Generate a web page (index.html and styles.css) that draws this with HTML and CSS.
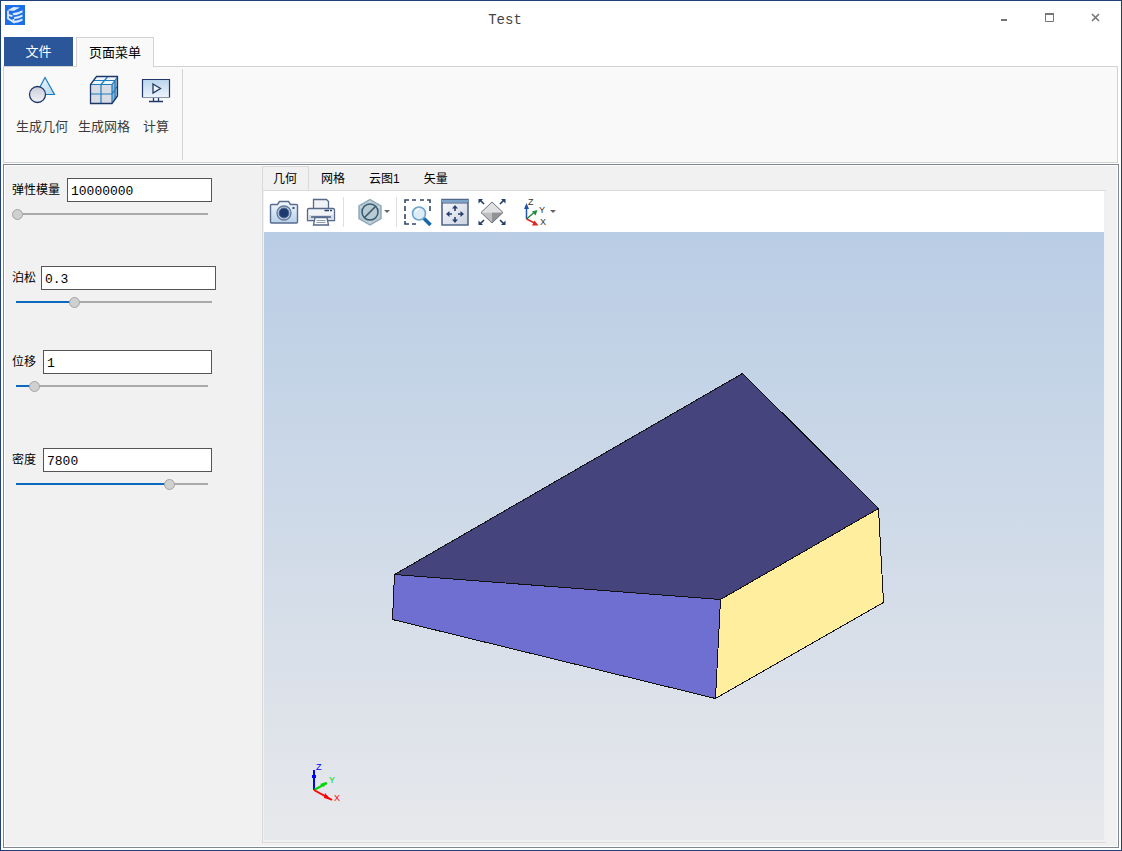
FILE: index.html
```html
<!DOCTYPE html>
<html lang="zh-CN">
<head>
<meta charset="utf-8">
<title>Test</title>
<link rel="stylesheet" href="styles.css">
</head>
<body>
<div class="window">
  <header class="titlebar">
    <svg class="app-icon" width="20" height="20" viewBox="0 0 20 20" aria-hidden="true">
      <rect width="20" height="20" fill="#1c6fe6"/>
      <path d="M2 5.500 8.500 2l6.500.500-6 3.200Z" fill="#dceafd"/>
      <path d="M3 6v7.500l5.500 3.500v-3M3 9.800l4.500 1.400" fill="none" stroke="#dceafd" stroke-width="1.800"/>
      <path d="M7.500 8.300q5-.300 10-3v2.200q-5 2.700-9 2.800ZM9 12q4-.300 8.500-2.500v2.200Q13 14 9 14ZM8 16q5-.300 9.500-2.500v2.200Q13 18 9 18Z" fill="#dceafd"/>
    </svg>
    <h1 class="title">Test</h1>
    <div class="controls">
      <button class="control" type="button" aria-label="最小化"><svg width="10" height="10" viewBox="0 0 10 10"><path d="M2 6h6v2H2z" fill="#757575"/></svg></button>
      <button class="control" type="button" aria-label="最大化"><svg width="10" height="10" viewBox="0 0 10 10"><path d="M.5 1v7.500h8V1" fill="none" stroke="#757575"/><path d="M0 0h9v2H0z" fill="#757575"/></svg></button>
      <button class="control" type="button" aria-label="关闭"><svg width="10" height="10" viewBox="0 0 10 10"><path d="m1 1 7 7M8 1 1 8" fill="none" stroke="#757575" stroke-width="1.600"/></svg></button>
    </div>
  </header>

  <nav class="menu">
    <button class="menu-tab menu-tab-file" type="button">文件</button>
    <button class="menu-tab menu-tab-active" type="button">页面菜单</button>
  </nav>

  <section class="ribbon">
    <div class="ribbon-group">
      <button class="tool" type="button">
        <svg width="30" height="30" viewBox="0 0 30 30" aria-hidden="true">
          <defs>
            <linearGradient id="tri" x1="0" y1="0" x2="1" y2="1"><stop offset="0" stop-color="#f4faff"/><stop offset="1" stop-color="#b5d7ee"/></linearGradient>
            <linearGradient id="ball" x1="0" y1="0" x2="0" y2="1"><stop offset="0" stop-color="#c9ccd8"/><stop offset="1" stop-color="#f2f2f6"/></linearGradient>
          </defs>
          <path d="M18 2.500 27.500 19.500H9Z" fill="url(#tri)" stroke="#1b7dbd" stroke-width="1.200"/>
          <circle cx="10.500" cy="19.500" r="8" fill="url(#ball)" stroke="#1f3767" stroke-width="1.300"/>
        </svg>
        <span>生成几何</span>
      </button>
      <button class="tool" type="button">
        <svg width="30" height="30" viewBox="0 0 30 30" aria-hidden="true">
          <path d="M1.500 9.500 8 1.500h20.500L23 9.500Z" fill="#eef5fb"/>
          <path d="M1.500 9.500H23v19H1.500Z" fill="#d9dce4"/>
          <path d="M23 9.500 28.500 2v19L23 28.500Z" fill="#9eb3cd"/>
          <path d="M1.500 19H23l5.500-8M12 28.500v-19L18.500 2M4.500 5.500H26v19M1.500 9.500H23v19M23 9.500 28.500 2" fill="none" stroke="#1b7dbd" stroke-width="1.200"/>
          <path d="M23 28.500H1.500v-19l6-8h21V21Z" fill="none" stroke="#1f3767" stroke-width="1.300"/>
        </svg>
        <span>生成网格</span>
      </button>
      <button class="tool" type="button">
        <svg width="30" height="30" viewBox="0 0 30 30" aria-hidden="true">
          <defs><linearGradient id="screen" x1="0" y1="0" x2="0" y2="1"><stop offset="0" stop-color="#b9d5ec"/><stop offset="1" stop-color="#edf4fb"/></linearGradient></defs>
          <path d="M1.500 4.500h27v18h-27Z" fill="url(#screen)" stroke="#1f3767" stroke-width="1.200"/>
          <path d="M1 22.500h28" stroke="#8793ad"/>
          <path d="M12.500 23v3.500M17.500 23v3.500M8 26.500h14" stroke="#1f3767" stroke-width="1.300"/>
          <path d="m12 9 7.500 4.500L12 18Z" fill="#eef5fb" stroke="#1f3767" stroke-width="1.300"/>
        </svg>
        <span>计算</span>
      </button>
    </div>
  </section>

  <main class="workspace">
    <form class="parameters">
      <div class="parameter">
        <div class="field"><label for="modulus">弹性模量</label><input class="value" id="modulus" type="text" value="10000000"></div>
        <input class="slider" type="range" aria-label="弹性模量" min="0" max="100" value="0" style="--fill:0%">
      </div>
      <div class="parameter parameter-wide">
        <div class="field"><label for="poisson">泊松</label><input class="value" id="poisson" type="text" value="0.3"></div>
        <input class="slider" type="range" aria-label="泊松" min="0" max="1" step="0.1" value="0.3" style="--fill:30%">
      </div>
      <div class="parameter parameter-spaced">
        <div class="field"><label for="shift">位移</label><input class="value" id="shift" type="text" value="1"></div>
        <input class="slider" type="range" aria-label="位移" min="0" max="11" value="1" style="--fill:9%">
      </div>
      <div class="parameter">
        <div class="field"><label for="density">密度</label><input class="value" id="density" type="text" value="7800"></div>
        <input class="slider" type="range" aria-label="密度" min="0" max="9500" step="100" value="7800" style="--fill:82%">
      </div>
    </form>

    <section class="viewer">
      <div class="view-tabs" role="tablist">
        <button class="view-tab view-tab-active" type="button" role="tab" aria-selected="true">几何</button>
        <button class="view-tab" type="button" role="tab">网格</button>
        <button class="view-tab" type="button" role="tab">云图1</button>
        <button class="view-tab" type="button" role="tab">矢量</button>
      </div>
      <div class="view-panel">
        <div class="toolbar">
          <button class="icon-button" type="button" aria-label="截图">
            <svg width="30" height="30" viewBox="0 0 30 30">
              <defs><linearGradient id="cam" x1="0" y1="0" x2="0" y2="1"><stop offset="0" stop-color="#f4f8fc"/><stop offset="1" stop-color="#b6d0e9"/></linearGradient></defs>
              <path d="M2.500 7.500h6l2-3h9l2 3h6q1 0 1 1v16.500q0 1-1 1h-25q-1 0-1-1V8.500q0-1 1-1Z" fill="url(#cam)" stroke="#596b8e" stroke-width="1.400"/>
              <circle cx="15" cy="16" r="7" fill="#c8d7e8" stroke="#657898" stroke-width="1.300"/>
              <circle cx="15" cy="16" r="5" fill="#1d3a70" stroke="#526b93"/>
              <path d="M23.500 10h2v2h-2z" fill="#34517f"/>
            </svg>
          </button>
          <button class="icon-button" type="button" aria-label="打印">
            <svg width="30" height="30" viewBox="0 0 30 30">
              <path d="M7.500 12V2.500h13l2 2V12Z" fill="#f0f2f6" stroke="#566987" stroke-width="1.300"/>
              <path d="M3 11.500h24q1.500 0 1.500 1.500v10.500h-27V13q0-1.500 1.500-1.500Z" fill="#f1f3f7" stroke="#566987" stroke-width="1.300"/>
              <path d="M2 18h26v5H2z" fill="#d5dae5"/>
              <path d="M18.500 13.500h4.500M24 13.500h2" stroke="#263f6f" stroke-width="1.500"/>
              <path d="M5 20h20" stroke="#425b83" stroke-width="1.500"/>
              <path d="M9 20.500 7.500 28h15L21 20.500Z" fill="#fafbfd" stroke="#566987" stroke-width="1.300"/>
              <path d="M10.500 23.500h9M10.500 25.500h9" stroke="#8e9cb3"/>
            </svg>
          </button>
          <span class="divider"></span>
          <button class="icon-button icon-button-menu" type="button" aria-label="显示模式">
            <svg width="26" height="30" viewBox="0 0 26 30">
              <path d="M14 2.500 25 9v12.500L14 28 3 21.500V9Z" fill="#b8c9d3" stroke="#8ca8b8" stroke-width="1.400"/>
              <path d="M14 4v22M4 9.500l10 5 10-5" fill="none" stroke="#d5e0e6"/>
              <circle cx="14" cy="15" r="8" fill="#b8cbd3" stroke="#35586c" stroke-width="1.500"/>
              <path d="m8.500 20.500 11-11" stroke="#35586c" stroke-width="1.600"/>
            </svg>
            <span class="caret"></span>
          </button>
          <span class="divider"></span>
          <button class="icon-button" type="button" aria-label="框选缩放">
            <svg width="30" height="30" viewBox="0 0 30 30">
              <path d="M2 6V3h4M9 3h4M17 3h4M24 3h3v3M27 9v5M2 9v5M2 17v5M2 24v3h4M9 27h4" fill="none" stroke="#304668" stroke-width="1.600"/>
              <circle cx="16" cy="16.500" r="6.500" fill="#dcecf8" stroke="#6ca4cc" stroke-width="1.600"/>
              <path d="m21 21.500 6.500 6.500" stroke="#1768aa" stroke-width="3.500"/>
              <path d="M12.500 15q1-2.500 3.500-3" fill="none" stroke="#fff" stroke-width="1.500"/>
            </svg>
          </button>
          <button class="icon-button" type="button" aria-label="平移">
            <svg width="30" height="30" viewBox="0 0 30 30">
              <defs><linearGradient id="pane" x1="0" y1="0" x2="1" y2="1"><stop offset="0" stop-color="#fafbfd"/><stop offset="1" stop-color="#cbd2df"/></linearGradient></defs>
              <path d="M2 2.500h26v25.500H2Z" fill="url(#pane)" stroke="#52688c" stroke-width="1.600"/>
              <path d="M2 3h26v2.500H2z" fill="#7da4cb"/><path d="M2 6h26" stroke="#3f5b86"/>
              <path d="M15 14v-3.500M15 20v3.500M12 17H8M18 17h4" stroke="#263f6f" stroke-width="1.600"/>
              <path d="m15 8 3 3.500h-6ZM15 26l3-3.500h-6ZM6 17l3.500-3v6ZM24 17l-3.500-3v6Z" fill="#263f6f"/>
            </svg>
          </button>
          <button class="icon-button" type="button" aria-label="适应窗口">
            <svg width="30" height="30" viewBox="0 0 30 30">
              <path d="M15 5 26 15.500H4Z" fill="#e1e1e2"/><path d="M4 15.500h11V26Z" fill="#bebfc1"/><path d="M15 15.500h11L15 26Z" fill="#929395"/>
              <path d="m15 5 11 10.500L15 26 4 15.500Z" fill="none" stroke="#6d727b"/>
              <path d="M7 7 3.500 3.500M23 7l3.500-3.500M7 23l-3.500 3.500M23 23l3.500 3.500" stroke="#263f6f" stroke-width="1.700"/>
              <path d="M1.500 2H6L1.500 6.500ZM28.500 2H24l4.500 4.500ZM1.500 28H6l-4.500-4.500ZM28.500 28H24l4.500-4.500Z" fill="#263f6f"/>
            </svg>
          </button>
          <button class="icon-button icon-button-menu icon-button-axes" type="button" aria-label="视图方向">
            <svg width="26" height="30" viewBox="0 0 26 30">
              <path d="M4.500 22V9" stroke="#2354a4" stroke-width="1.500"/><path d="m4.500 6 2.500 6H2Z" fill="#2354a4"/>
              <path d="m4.500 22 7-6" stroke="#1c8a42" stroke-width="1.500"/><path d="m15.500 13-2 5.500-3.500-4Z" fill="#1c8a42"/>
              <path d="m4.500 22 8 4" stroke="#e02525" stroke-width="1.500"/><path d="m16.500 28.500-6.500 0 2.500-5Z" fill="#e02525"/>
              <g class="axis-label" fill="#333"><text x="6" y="8">Z</text><text x="17" y="16">Y</text><text x="18" y="28">X</text></g>
            </svg>
            <span class="caret"></span>
          </button>
        </div>
        <div class="viewport">
          <svg class="scene" viewBox="0 0 840 608" role="img" aria-label="几何模型">
            <g stroke="#111" stroke-linejoin="round" shape-rendering="crispEdges">
              <path d="M130.500 342.500 478.500 141.500 614.500 276.500 456.500 367.500Z" fill="#46447d"/>
              <path d="M130.500 342.500 456.500 367.500 451.500 466.500 128.500 387.500Z" fill="#6f6ed1"/>
              <path d="M456.500 367.500 614.500 276.500 619.500 370.500 451.500 466.500Z" fill="#ffee9e"/>
            </g>
            <g stroke-width="2">
              <path d="M50 558V538" stroke="#00f"/><path d="M48 543h4v3h-4Z" fill="#00f"/>
              <path d="m50 558 13-7" stroke="#00d800"/><path d="m56 552 6-2-2 5Z" fill="#00d800"/>
              <path d="m50 558 18 10" stroke="red"/><path d="m61 561 6 7-7-2Z" fill="red"/>
            </g>
            <g class="triad-label"><text x="52" y="538" fill="#00f">Z</text><text x="65" y="551" fill="#00d800">Y</text><text x="70" y="569" fill="red">X</text></g>
          </svg>
        </div>
      </div>
    </section>
  </main>
</div>
</body>
</html>
```
FILE: styles.css
```css
* { box-sizing: border-box; }

body {
  margin: 0;
  font: 12px/16px "Liberation Sans", "Noto Sans CJK SC", sans-serif;
  color: #000;
}

button {
  margin: 0;
  padding: 0;
  border: 0;
  background: none;
  font: inherit;
  color: inherit;
}

svg { display: block; }

.window {
  display: flex;
  flex-direction: column;
  min-height: 100vh;
  padding: 0 2px 2px;
  border: 1px solid #1f3f77;
  background: #fff;
}

.titlebar {
  display: grid;
  grid-template-columns: 1fr auto 1fr;
  height: 36px;
  padding: 0 10px 0 2px;
}

.app-icon { margin-top: 4px; }

.title {
  margin: 10px 104px 0 0;
  font: 14px/18px "Liberation Mono", monospace;
  color: #444;
}

.controls {
  display: flex;
  justify-content: flex-end;
  height: 34px;
}

.control {
  display: grid;
  place-items: center;
  width: 46px;
}

.control:last-child { width: 26px; margin-left: 10px; }

.menu {
  display: flex;
  gap: 3px;
  padding-left: 1px;
  font-size: 13px;
}

.menu-tab { height: 29px; }

.menu-tab-file {
  width: 69px;
  background: #2b579a;
  color: #fff;
}

.menu-tab-active {
  height: 30px;
  margin-bottom: -1px;
  padding: 0 12px;
  border: 1px solid #d2d2d2;
  border-bottom: 0;
  background: #f9f9f9;
  z-index: 1;
}

.ribbon {
  display: flex;
  height: 97px;
  margin-right: 1px;
  padding: 2px 0;
  border: 1px solid #d2d2d2;
  background: #f9f9f9;
}

.ribbon-group {
  display: flex;
  gap: 10px;
  padding: 6px 11px 0 12px;
  border-right: 1px solid #d2d2d2;
}

.tool {
  display: flex;
  flex-direction: column;
  align-items: center;
  gap: 14px;
  height: 62px;
  font-size: 13px;
  color: #3b3b3b;
}

.tool:last-child { margin-left: 1px; }

.workspace {
  display: flex;
  flex: 1;
  margin-top: 1px;
  padding: 0 12px 4px 8px;
  border: 1px solid #808690;
  background: #f1f1f1;
  box-shadow: inset 0 0 0 1px #fff;
}

.parameters {
  width: 250px;
  padding-top: 13px;
}

.parameter {
  display: flex;
  flex-direction: column;
  gap: 6px;
  width: 200px;
  margin-bottom: 46px;
}

.parameter-wide { width: 204px; margin-bottom: 42px; }
.parameter-wide .field { gap: 5px; }
.parameter-spaced { margin-bottom: 56px; }

.field {
  display: flex;
  align-items: center;
  gap: 7px;
}

.value {
  flex: 1;
  min-width: 0;
  height: 24px;
  padding: 2px 3px 0;
  border: 1px solid #555;
  border-radius: 0;
  background: #fff;
  font: 13px/18px "Liberation Mono", monospace;
  color: #000;
}

.slider {
  appearance: none;
  width: calc(100% - 4px);
  height: 12px;
  margin: 0;
  background: linear-gradient(to right, transparent 4px, #0c69bd 4px, #0c69bd var(--fill), #aaa var(--fill)) center / 100% 2px no-repeat;
}

.parameter:first-child .slider {
  background-image: linear-gradient(to right, transparent 4px, #aaa 4px);
}

.slider::-webkit-slider-thumb {
  appearance: none;
  width: 11px;
  height: 11px;
  border: 1px solid #a3a3a3;
  border-radius: 50%;
  background: #d0d0d0;
}

.viewer {
  display: flex;
  flex: 1;
  flex-direction: column;
  padding-top: 1px;
}

.view-tabs {
  display: flex;
  height: 24px;
}

.view-tab {
  padding: 2px 12px 0;
}

.view-tab-active {
  padding: 1px 11px 0 10px;
  border: 1px solid #d9d9d9;
  border-bottom: 0;
}

.view-panel {
  display: flex;
  flex: 1;
  flex-direction: column;
  padding: 0 1px 2px;
  border: 1px solid #d9d9d9;
  border-right-color: #eee;
}

.toolbar {
  display: flex;
  align-items: center;
  gap: 7px;
  height: 41px;
  padding-left: 5px;
  background: #fff;
}

.icon-button-menu {
  display: flex;
  align-items: center;
  gap: 2px;
}

.icon-button-axes { margin-left: 8px; }

.divider {
  width: 1px;
  height: 30px;
  margin-right: 5px;
  background: #dedede;
}

.icon-button-menu + .divider { margin: 0 -1px; }

.caret {
  border: 3px solid transparent;
  border-top-color: #666;
  border-bottom: 0;
}

.axis-label { font: 9px "Liberation Sans", sans-serif; }

.viewport {
  display: flex;
  flex: 1;
  background: linear-gradient(#b9cde5, #e7e8eb);
}

.scene {
  flex: 1;
  width: 100%;
  min-width: 0;
}

.triad-label { font: 9px "Liberation Sans", sans-serif; }
```
